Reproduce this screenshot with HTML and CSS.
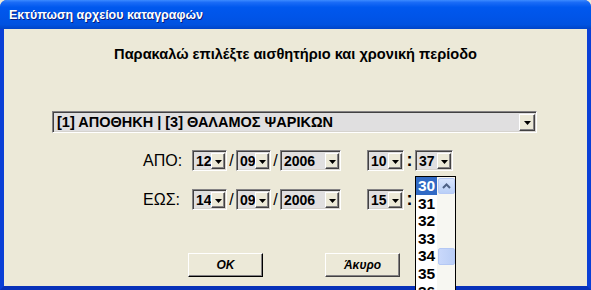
FILE: index.html
```html
<!DOCTYPE html>
<html lang="el">
<head>
<meta charset="utf-8">
<title>Εκτύπωση αρχείου καταγραφών</title>
<link rel="stylesheet" href="styles.css">
</head>
<body>
<div class="window">
  <div class="titlebar"><span class="title">Εκτύπωση αρχείου καταγραφών</span></div>
  <div class="client">
    <p class="heading">Παρακαλώ επιλέξτε αισθητήριο και χρονική περίοδο</p>
    <div class="combo sensor">
      <span class="val">[1] ΑΠΟΘΗΚΗ | [3] ΘΑΛΑΜΟΣ ΨΑΡΙΚΩΝ</span>
      <span class="btn"><svg width="7" height="4" viewBox="0 0 7 4"><path d="M0 0h7L3.5 4z" fill="#000"/></svg></span>
    </div>
    <div class="row first">
      <span class="lbl">ΑΠΟ:</span>
      <div class="combo day"><span class="val">12</span><span class="btn"><svg width="7" height="4" viewBox="0 0 7 4"><path d="M0 0h7L3.5 4z" fill="#000"/></svg></span></div>
      <span class="sep">/</span>
      <div class="combo day"><span class="val">09</span><span class="btn"><svg width="7" height="4" viewBox="0 0 7 4"><path d="M0 0h7L3.5 4z" fill="#000"/></svg></span></div>
      <span class="sep">/</span>
      <div class="combo year"><span class="val">2006</span><span class="btn"><svg width="7" height="4" viewBox="0 0 7 4"><path d="M0 0h7L3.5 4z" fill="#000"/></svg></span></div>
      <div class="combo hour"><span class="val">10</span><span class="btn"><svg width="7" height="4" viewBox="0 0 7 4"><path d="M0 0h7L3.5 4z" fill="#000"/></svg></span></div>
      <span class="colon">:</span>
      <div class="combo minute open"><span class="val">37</span><span class="btn"><svg width="7" height="4" viewBox="0 0 7 4"><path d="M0 0h7L3.5 4z" fill="#000"/></svg></span>
        <div class="droplist">
          <ul class="items">
            <li class="sel">30</li>
            <li>31</li>
            <li>32</li>
            <li>33</li>
            <li>34</li>
            <li>35</li>
            <li>36</li>
          </ul>
          <div class="scroll">
            <span class="up"><svg width="9" height="6" viewBox="0 0 9 6"><path d="M1 5L4.5 1.5L8 5" fill="none" stroke="#4D6185" stroke-width="2"/></svg></span>
            <span class="thumb"></span>
          </div>
        </div>
      </div>
    </div>
    <div class="row second">
      <span class="lbl">ΕΩΣ:</span>
      <div class="combo day"><span class="val">14</span><span class="btn"><svg width="7" height="4" viewBox="0 0 7 4"><path d="M0 0h7L3.5 4z" fill="#000"/></svg></span></div>
      <span class="sep">/</span>
      <div class="combo day"><span class="val">09</span><span class="btn"><svg width="7" height="4" viewBox="0 0 7 4"><path d="M0 0h7L3.5 4z" fill="#000"/></svg></span></div>
      <span class="sep">/</span>
      <div class="combo year"><span class="val">2006</span><span class="btn"><svg width="7" height="4" viewBox="0 0 7 4"><path d="M0 0h7L3.5 4z" fill="#000"/></svg></span></div>
      <div class="combo hour"><span class="val">15</span><span class="btn"><svg width="7" height="4" viewBox="0 0 7 4"><path d="M0 0h7L3.5 4z" fill="#000"/></svg></span></div>
      <span class="colon">:</span>
      <div class="combo minute"><span class="val"></span><span class="btn"><svg width="7" height="4" viewBox="0 0 7 4"><path d="M0 0h7L3.5 4z" fill="#000"/></svg></span></div>
    </div>
    <div class="buttons">
      <button class="pbtn default">OK</button>
      <button class="pbtn">Άκυρο</button>
    </div>
  </div>
</div>
</body>
</html>
```
FILE: styles.css
```css
* { box-sizing: border-box; }
html, body { margin: 0; padding: 0; background: #ECE9D8; }
body { font-family: "Liberation Sans", Arial, sans-serif; }
.window {
  width: 591px; height: 290px;
  display: flex; flex-direction: column;
  background: #0A46DC;
  border-radius: 7px 7px 0 0;
  overflow: visible;
}
.titlebar {
  height: 29px; flex: none;
  border-radius: 7px 7px 0 0;
  background: linear-gradient(to bottom, #3D8BFF 0%, #1B6CF7 8%, #0058EE 25%, #0054E8 60%, #0052E0 85%, #0044C8 100%);
  display: flex; align-items: center;
  padding-left: 9px;
}
.title {
  color: #fff; font-weight: bold; font-size: 12.5px;
  font-family: "Liberation Sans", Arial, sans-serif;
  text-shadow: 1px 1px 0 #0A1E7A;
}
.client {
  flex: 1;
  position: relative;
  background: #ECE9D8;
  border-left: 4px solid #0A3FD6;
  border-right: 4px solid #0A3FD6;
  border-bottom: 4px solid #0831B9;
  display: flex; flex-direction: column;
}
.heading {
  margin: 17px 0 0; padding-left: 0;
  height: 17px; line-height: 17px;
  text-align: center; font-weight: bold; font-size: 14.6px; color: #000;
}
.combo {
  position: relative;
  display: flex; align-items: stretch;
  height: 21px;
  background: #E0DFE0;
  border: 1px solid; border-color: #848284 #fff #fff #848284;
  box-shadow: inset 1px 1px 0 #424142, inset -1px -1px 0 #D6D3CE;
  padding: 2px 1px 1px 2px;
}
.combo .val {
  flex: 1; font-weight: bold; font-size: 14px; line-height: 16px;
  padding-left: 1px; color: #000; white-space: nowrap; overflow: hidden;
}
.combo .btn {
  flex: none; width: 14px;
  background: #ECE9D8;
  border: 1px solid; border-color: #fff #424142 #424142 #fff;
  box-shadow: inset -1px -1px 0 #848284;
  display: flex; align-items: center; justify-content: center;
  padding-top: 1px;
}
.sensor { margin: 48px 0 0 48px; width: 485px; height: 22px; }
.sensor .btn { width: 16px; }
.sensor .val { font-size: 14.5px; line-height: 17px; padding-left: 2px; }
.row { display: flex; align-items: center; margin-left: 139px; height: 21px; }
.row.first { margin-top: 17px; }
.row.second { margin-top: 18px; }
.lbl { width: 49px; font-size: 16px; color: #000; }
.sep { width: 9px; text-align: center; font-size: 16px; }
.colon { width: 11px; text-align: center; font-weight: bold; font-size: 18px; }
.day { width: 35px; }
.year { width: 61px; }
.hour { width: 37px; margin-left: 26px; }
.minute { width: 38px; }
.droplist {
  position: absolute; left: -1px; top: 25px;
  width: 41px; height: 118px;
  background: #fff; border: 1px solid #000;
  display: flex; overflow: hidden; z-index: 5;
}
.items { list-style: none; margin: 0; padding: 0; flex: 1; }
.items li {
  height: 17.6px; line-height: 18px;
  font-weight: bold; font-size: 15.5px; padding-left: 2px; color: #000;
}
.items li.sel { background: #316AC5; color: #fff; }
.scroll {
  width: 18px; flex: none;
  background: #F7F7F2;
  display: flex; flex-direction: column; align-items: center;
  padding-top: 1px;
}
.scroll .up {
  width: 17px; height: 16px;
  background: linear-gradient(#D8E5FD, #B9CFF7);
  border: 1px solid #B7CAF5; border-radius: 2px;
  display: flex; align-items: center; justify-content: center;
}
.scroll .thumb {
  margin-top: 54px; width: 17px; height: 17px;
  background: linear-gradient(to right, #C9D8FB, #BACEF6);
  border: 1px solid #B4C8F4; border-radius: 2px;
}
.buttons {
  display: flex; justify-content: center; gap: 62px;
  margin-top: 43px; padding-right: 3px;
}
.pbtn {
  width: 75px; height: 24px;
  font-family: "Liberation Sans", Arial, sans-serif;
  font-weight: bold; font-style: italic; font-size: 12px; color: #000;
  background: #ECE9D8;
  border: 1px solid; border-color: #fff #424142 #424142 #fff;
  box-shadow: inset -1px -1px 0 #848284;
  padding: 0;
}
.pbtn.default { border-color: #fff #000 #000 #fff; }
```
